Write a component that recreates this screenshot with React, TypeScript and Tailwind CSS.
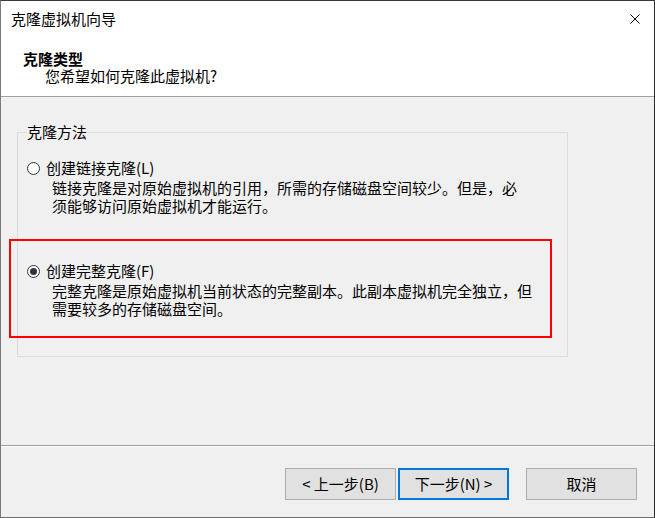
import type { ReactNode } from "react";

/* Windows-style clone wizard page ("克隆类型") */

const FONT = "[font-family:'Noto_Sans_CJK_SC','Noto_Sans',sans-serif]";

function Radio({ checked }: { checked?: boolean }) {
  return (
    <span className="flex h-[13px] w-[13px] shrink-0 items-center justify-center rounded-full border border-[#333333] bg-white">
      {checked ? <span className="block h-[7px] w-[7px] rounded-full bg-[#333333]" /> : null}
    </span>
  );
}

function Option({
  checked,
  label,
  lines,
  className = "",
}: {
  checked?: boolean;
  label: ReactNode;
  lines: string[];
  className?: string;
}) {
  return (
    <div className={className}>
      <div className="flex h-[18px] items-center gap-[6px] pl-[9px]">
        <Radio checked={checked} />
        <span className="whitespace-nowrap">{label}</span>
      </div>
      <div className="mt-[2px] pl-[34px]">
        {lines.map((l) => (
          <div key={l} className="h-[18px] whitespace-nowrap">
            {l}
          </div>
        ))}
      </div>
    </div>
  );
}

function Button({ children, primary }: { children: ReactNode; primary?: boolean }) {
  return (
    <button
      className={
        "flex h-[32px] w-[111px] items-center justify-center bg-[#e1e1e1] text-[15px] leading-[18px] text-black " +
        (primary ? "border-2 border-[#0078d7]" : "border border-[#adadad]")
      }
    >
      {children}
    </button>
  );
}

export default function App() {
  return (
    <div
      className={`relative flex h-[518px] w-[655px] flex-col border border-b-[#6e6e6e] border-l-[#7a7a7a] border-r-[#2b2b2b] border-t-[#3a3a3a] bg-[#f0f0f0] text-[15px] leading-[18px] text-black ${FONT}`}
    >
      {/* header */}
      <div className="h-[96px] shrink-0 border-b border-[#a0a0a0] bg-white">
        <div className="flex h-[36px] items-center justify-between pl-[10px] pr-[14px]">
          <span>克隆虚拟机向导</span>
          <svg width="10" height="10" viewBox="0 0 10 10" className="-mt-[1px]" aria-hidden>
            <path d="M0.5 0.5 L9.5 9.5 M9.5 0.5 L0.5 9.5" stroke="#000" strokeWidth="1" fill="none" />
          </svg>
        </div>
        <div className="pt-[13px] leading-[17px]">
          <div className="pl-[22px] font-bold">克隆类型</div>
          <div className="pl-[44px]">您希望如何克隆此虚拟机?</div>
        </div>
      </div>

      {/* body */}
      <div className="flex-1 pl-[16px] pt-[35px]">
        <div className="relative h-[225px] w-[551px] border border-[#dcdcdc]">
          <span className="absolute -top-[10px] left-[9px] bg-[#f0f0f0]">克隆方法</span>
          <Option
            className="pt-[26px]"
            label="创建链接克隆(L)"
            lines={["链接克隆是对原始虚拟机的引用，所需的存储磁盘空间较少。但是，必", "须能够访问原始虚拟机才能运行。"]}
          />
          <Option
            className="mt-[47px]"
            checked
            label="创建完整克隆(F)"
            lines={["完整克隆是原始虚拟机当前状态的完整副本。此副本虚拟机完全独立，但", "需要较多的存储磁盘空间。"]}
          />
        </div>
      </div>

      {/* footer */}
      <div className="h-[72px] shrink-0 border-t border-[#a0a0a0]">
        <div className="h-[1px] bg-white" />
        <div className="flex justify-end pr-[17px] pt-[21px]">
          <Button>&lt; 上一步(B)</Button>
          <div className="ml-[2px]">
            <Button primary>下一步(N) &gt;</Button>
          </div>
          <div className="ml-[17px]">
            <Button>取消</Button>
          </div>
        </div>
      </div>

      {/* red highlight annotation */}
      <div className="pointer-events-none absolute left-[8px] top-[238px] h-[99px] w-[543px] border-2 border-[#ff0000]" />
    </div>
  );
}
